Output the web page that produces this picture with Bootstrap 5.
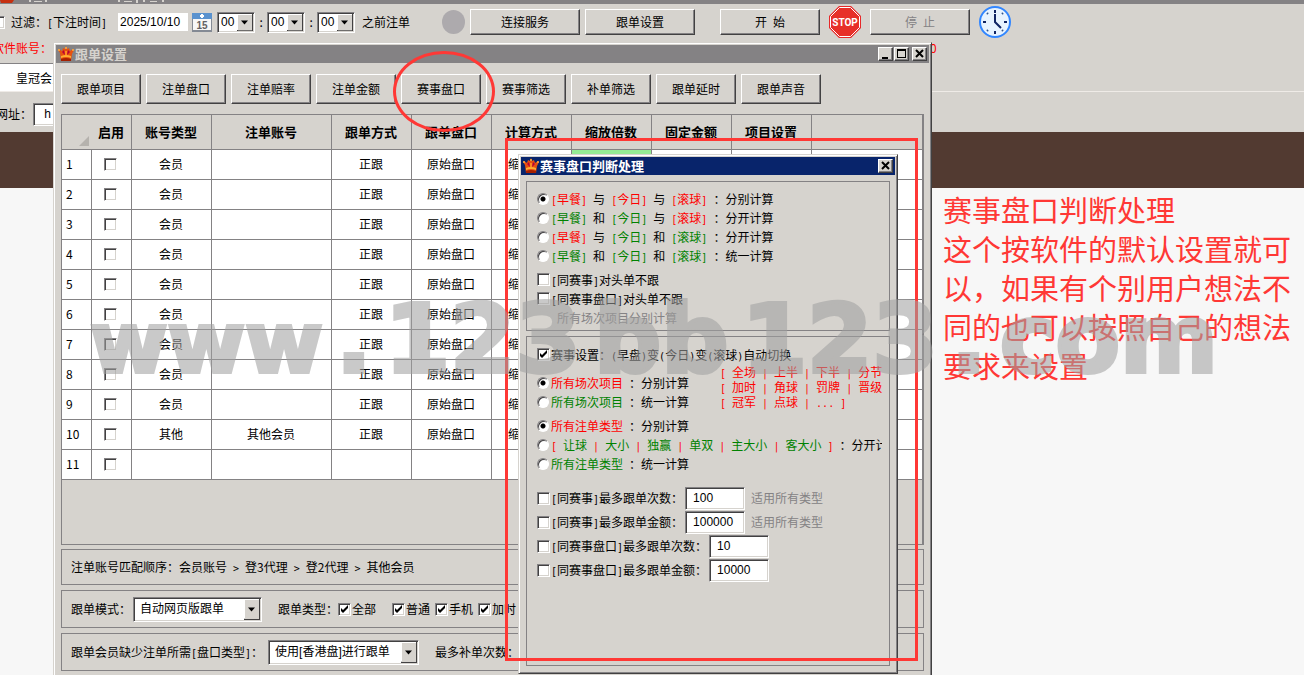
<!DOCTYPE html>
<html lang="zh-CN">
<head>
<meta charset="utf-8">
<meta name="viewport" content="width=device-width, initial-scale=1">
<title>跟单设置</title>
<link rel="stylesheet" href="https://cdn.jsdelivr.net/npm/bootstrap@5.3.0/dist/css/bootstrap.min.css">
<style>
:root{--face:#d6d3ce;--shade:#848284;--deep:#424142;--note:#ff3835}
body{font:12px/16px "Noto Sans CJK SC",sans-serif;color:#000;background:#f7f7f7;height:100vh;overflow:hidden;position:relative}
i{font:normal 10px/12px "DejaVu Sans Mono",monospace;white-space:pre}
label,span,legend{flex-shrink:0}
.r{color:#f00}.g{color:#008200}.gray{color:var(--shade)}
/* classic bevelled controls */
.btn-face{background:var(--face);color:#000;font-size:12px;line-height:16px;padding:0;border:1px solid;border-color:#fff var(--deep) var(--deep) #fff;box-shadow:inset -1px -1px var(--shade);flex-shrink:0}
.btn-face:disabled{background:var(--face);color:var(--shade);opacity:1;border-color:#fff var(--deep) var(--deep) #fff}
.bar-btn{height:26px}.w-a{width:110px}.w-b{width:100px}
.tab-btn{width:80px;height:30px}
.cap-btn{width:15px;height:14px;display:flex}
.sunk{background-color:#fff;border:1px solid;border-color:var(--shade) #fff #fff var(--shade);box-shadow:inset 1px 1px var(--deep),inset -1px -1px var(--face);border-radius:0;color:#000;flex-shrink:0}
input.sunk[type=text]{width:60px;height:23px;padding:0 7px;font:12px/16px "Liberation Sans",sans-serif}
input[type=checkbox]{appearance:none;width:13px;height:13px;margin:0;flex-shrink:0}
input[type=checkbox]:checked{background:#fff url("data:image/svg+xml,%3Csvg xmlns='http://www.w3.org/2000/svg' width='11' height='11'%3E%3Cpath d='M2 4v3l2 2 5-5V1L4 6z' fill='%23000'/%3E%3C/svg%3E") no-repeat}
input[type=radio]{appearance:none;width:12px;height:12px;margin:0 1px 0 0;border-radius:50%;background:#fff;border:1px solid;border-color:var(--shade) #fff #fff var(--shade);box-shadow:inset 1px 1px var(--deep);flex-shrink:0}
input[type=radio]:checked{background:radial-gradient(circle at 5px 5px,#000 2px,#fff 3px)}
select.sunk{appearance:none;height:21px;width:38px;padding:0 16px 0 3px;font:12px/16px "Liberation Sans","Noto Sans CJK SC",sans-serif;background:#fff url("data:image/svg+xml,%3Csvg xmlns='http://www.w3.org/2000/svg'%3E%3Crect width='100%25' height='100%25' fill='%23424142'/%3E%3Crect width='15' height='94%25' fill='%23fff'/%3E%3Crect x='1' y='1' width='14' height='90%25' fill='%23d6d3ce'/%3E%3Csvg x='0' y='50%25' overflow='visible'%3E%3Cpath d='M4-2h7L7.500 2z'/%3E%3C/svg%3E%3C/svg%3E") no-repeat right 1px top 1px/16px calc(100% - 2px)}
select.wide{height:25px;width:129px;padding-left:6px}
select.wider{width:151px}
/* desktop */
.strip{height:4px;background:var(--shade)}
.zone{background:var(--face)}
.toolbar{height:36px;padding-left:5px}
.toolbar .off{margin-left:-13px;margin-right:6px}
.date{width:70px;height:18px;padding:0 2px;border:0;font:12px/16px "Liberation Sans",sans-serif}
.led{width:23px;height:24px;border-radius:50%;background:#adaaad}
.colon{width:12px;text-align:center}
.acct{height:23px;padding:0 0 8px}
.acct .first{width:938px;margin-left:-8px}
.tabs{height:29px;border-bottom:1px solid #efebe7}
.tabs div{width:53px;background:#fff;border-top:1px solid var(--shade);padding:6px 0 0 16px}
.url{height:40px;padding-top:4px}
.url label{margin-left:-4px;width:37px}
.brown{height:56px;background:#523a31}
.m2{margin-left:2px}.m4{margin-left:4px}.m5{margin-left:5px}.m7{margin-left:7px}.m9{margin-left:9px}.m11{margin-left:11px}.m16{margin-left:16px}.m25{margin-left:25px}.m32{margin-left:32px}
/* windows */
.win{position:absolute;background:var(--face);border:1px solid;border-color:var(--face) var(--deep) var(--deep) var(--face);box-shadow:inset 1px 1px #fff,inset -1px -1px var(--shade);padding:2px}
.win-main{left:53px;top:42px;width:879px;bottom:-8px}
.win-dlg{left:518px;top:154px;width:380px;height:520px}
.title{height:18px;background:var(--shade);color:var(--face);font-weight:700;font-size:13px;padding:0 2px;gap:1px}
.win-dlg .title{background:#08246b;color:#fff}
.title svg.crown{width:16px;height:16px}
.win-body{padding:11px 5px 0}
.tab-row{gap:5px}
.gridbox{height:431px;margin-top:10px;border:1px solid var(--shade);border-right-width:2px}
.gridbox table{width:100%;table-layout:fixed;border-collapse:separate;border-spacing:0}
.gridbox th,.gridbox td{border:0 solid var(--shade);border-width:0 1px 1px 0;text-align:center;vertical-align:middle;padding:0 1px 1px 0;height:30px;overflow:hidden}
.gridbox th{height:35px;font-size:13px}
.gridbox td{background:#fff}
.gridbox td:first-child{text-align:left;padding-left:4px}
.gridbox td:nth-child(7){text-align:left;padding-left:16px}
.gridbox th:last-child,.gridbox td:last-child{border-right:0}
.gridbox td input{display:block;margin:0 0 0 12px}
.gridbox td.hit{background:#94eb94}
.gridbox th.corner{vertical-align:bottom}
.corner svg{display:block;margin:0 0 2px 17px}
.pane{border:1px solid var(--shade);padding-left:9px;height:38px;margin-top:5px}
.pane.low{height:36px;margin-top:4px}
.pane .tick{margin:0 5px 0 1px}
.pane .tick.far{margin-right:16px}
.dlg-body{padding:6px 5px 0}
.box{border:1px solid var(--shade);padding:7px 7px 3px 10px;overflow:hidden}
.box+.box{margin-top:5px;height:330px;padding-top:8px}
.line{height:19px;display:flex;align-items:center;gap:1px}
.line.tall{height:24px}
.line.tall input[type=text]{margin-left:1px}
.gap5{margin-top:5px}.gap9{margin-top:9px}.gap13{margin-top:13px}
.sorts{line-height:14px;margin:-8px 0 0 31px;overflow:hidden}
/* annotations over the windows */
.over{position:absolute;pointer-events:none}
.ring{left:393px;top:51px;width:102px;height:81px;border:3px solid var(--note);border-radius:50%}
.frame{left:505px;top:138px;width:413px;height:523px;border:3px solid var(--note)}
.remark{left:943px;right:8px;top:190px;color:var(--note);font-size:29px;line-height:39px}
.remark p{margin:0}
.wm{left:90px;width:1128px;top:285px;font:700 94px/110px "DejaVu Sans",sans-serif;color:#a0a0a0;-webkit-text-stroke:4px #a0a0a0;opacity:.56;display:flex;justify-content:space-between;align-items:baseline}
.wm .ww{font-size:84px}
</style>
</head>
<body>
<svg width="0" height="0" class="position-absolute"><symbol id="crown" viewBox="0 0 16 16"><path d="M2 7L0 4l1-1 3 2 1-3 2 1 1-3 1 3 2-1 1 3 3-2 1 1-2 4-1 7H3z" fill="#e75110"/><path d="M4 6l2-2 1 5zM12 6l-2-2-1 5z" fill="#b5003a"/><path d="M3 10q5-2 10 0v2q-5-2-10 0z" fill="#ffae31"/><path d="M3 13q5-2 10 0v2H3z" fill="#a52000"/><circle cx="1" cy="4" r="1" fill="#ffb242"/><circle cx="15" cy="4" r="1" fill="#ffb242"/><circle cx="8" cy="2" r="1" fill="#ffb242"/><path d="M7 5h2v4H7z" fill="#ff8a21"/></symbol></svg>
<main>
<div class="strip"><svg width="200" height="4" class="d-block"><path d="M0 0h14l-2 3H1z" fill="#c63010"/><path d="M29 0h2v2h-2zM34 1h8v1h-8zM45 0h2v2h-2zM118 0h2v2h-2zM124 1h8v1h-8zM136 0h2v3h-2zM143 0h2v2h-2zM150 1h7v1h-7zM162 0h2v2h-2z" fill="#d6d3ce"/></svg></div>
<div class="zone">
<div class="toolbar d-flex align-items-center"><input type="checkbox" id="flt" class="sunk off"><label for="flt">过滤：</label><span><i>[</i>下注时间<i>]</i></span><input class="date m11" type="text" value="2025/10/10" aria-label="日期"><svg class="m4 flex-shrink-0" width="20" height="19"><path d="M0 0h20v19H0z" fill="#848a94"/><path d="M1 6h18v11H1z" fill="#f7f7f7"/><path d="M0 0h20v6H0z" fill="#5a92ce"/><path d="M9 1h2v4H9zM8 2h4v2H8z" fill="#fff"/><text x="10" y="16" text-anchor="middle" font-family="Liberation Sans" font-weight="700" font-size="10" fill="#636163">15</text></svg><select class="sunk m5" aria-label="时"><option>00</option></select><span class="colon">:</span><select class="sunk" aria-label="分"><option>00</option></select><span class="colon">:</span><select class="sunk" aria-label="秒"><option>00</option></select><span class="m7">之前注单</span><span class="led m32"></span><button class="btn-face bar-btn w-a m5">连接服务</button><button class="btn-face bar-btn w-a m5">跟单设置</button><button class="btn-face bar-btn w-b m25">开&ensp;始</button>
<svg class="m9 flex-shrink-0" width="32" height="32" viewBox="0 0 32 32"><path d="M10 0h12l10 10v12L22 32H10L0 22V10z" fill="#e72829"/><path d="M10.500 1.500h11l9 9v11l-9 9h-11l-9-9v-11z" fill="#e73029" stroke="#fff"/><text x="16" y="20" text-anchor="middle" font-family="Roboto,sans-serif" font-weight="700" font-size="10" fill="#fff">STOP</text></svg><button class="btn-face bar-btn w-b m9" disabled>停&ensp;止</button><svg class="m9 flex-shrink-0" width="32" height="32" viewBox="0 0 32 32"><circle cx="16" cy="16" r="15" fill="#e7f3ff" stroke="#3186ff" stroke-width="2"/><path d="M16 4v3M16 25v3M4 16h3M25 16h3" stroke="#102463" stroke-width="2"/><path d="M8 7l1 1M23 8l1-1M8 25l1-1M23 24l1 1" stroke="#31558c" stroke-width="2"/><path d="M16 8v8l6 6" fill="none" stroke="#102463" stroke-width="2"/></svg></div>
<div class="acct d-flex r"><span class="first">软件账号：</span><span>0</span></div>
<div class="tabs d-flex"><div class="text-nowrap overflow-hidden">皇冠会员</div></div>
<div class="url d-flex align-items-center"><label for="u">网址：</label><input id="u" class="sunk" type="text" value=" h"></div>
</div>
<div class="brown"></div>
</main>

<section class="win win-main">
<div class="title d-flex align-items-center"><svg class="crown"><use href="#crown"/></svg><span class="me-auto">跟单设置</span><button class="btn-face cap-btn" aria-label="最小化"><svg width="12" height="11"><path d="M3 9h6v2H3z"/></svg></button><button class="btn-face cap-btn" aria-label="最大化"><svg width="12" height="11"><path d="M2 1h9v9H2zM3 3v6h7V3z" fill-rule="evenodd"/></svg></button><button class="btn-face cap-btn m2" aria-label="关闭"><svg width="12" height="11"><path d="M3 2l7 7M10 2L3 9" stroke="#000" stroke-width="2"/></svg></button></div>
<div class="win-body">
<div class="d-flex tab-row"><button class="btn-face tab-btn">跟单项目</button><button class="btn-face tab-btn">注单盘口</button><button class="btn-face tab-btn">注单赔率</button><button class="btn-face tab-btn">注单金额</button><button class="btn-face tab-btn">赛事盘口</button><button class="btn-face tab-btn">赛事筛选</button><button class="btn-face tab-btn">补单筛选</button><button class="btn-face tab-btn">跟单延时</button><button class="btn-face tab-btn">跟单声音</button></div>
<div class="gridbox"><table>
<colgroup><col width="30"><col width="40"><col width="80"><col width="120"><col width="80"><col width="80"><col width="80"><col width="80"><col width="80"><col width="80"><col></colgroup>
<thead><tr><th class="corner border-end-0"><svg width="10" height="10"><path d="M10 0v10H0z" fill="#b5b2ad"/></svg></th><th>启用</th><th>账号类型</th><th>注单账号</th><th>跟单方式</th><th>跟单盘口</th><th>计算方式</th><th>缩放倍数</th><th>固定金额</th><th>项目设置</th><th></th></tr></thead>
<tbody>
<tr><td>1</td><td><input type="checkbox" class="sunk" aria-label="启用1"></td><td>会员</td><td></td><td>正跟</td><td>原始盘口</td><td>缩</td><td class="hit"></td><td></td><td></td><td></td></tr>
<tr><td>2</td><td><input type="checkbox" class="sunk" aria-label="启用2"></td><td>会员</td><td></td><td>正跟</td><td>原始盘口</td><td>缩</td><td></td><td></td><td></td><td></td></tr>
<tr><td>3</td><td><input type="checkbox" class="sunk" aria-label="启用3"></td><td>会员</td><td></td><td>正跟</td><td>原始盘口</td><td>缩</td><td></td><td></td><td></td><td></td></tr>
<tr><td>4</td><td><input type="checkbox" class="sunk" aria-label="启用4"></td><td>会员</td><td></td><td>正跟</td><td>原始盘口</td><td>缩</td><td></td><td></td><td></td><td></td></tr>
<tr><td>5</td><td><input type="checkbox" class="sunk" aria-label="启用5"></td><td>会员</td><td></td><td>正跟</td><td>原始盘口</td><td>缩</td><td></td><td></td><td></td><td></td></tr>
<tr><td>6</td><td><input type="checkbox" class="sunk" aria-label="启用6"></td><td>会员</td><td></td><td>正跟</td><td>原始盘口</td><td>缩</td><td></td><td></td><td></td><td></td></tr>
<tr><td>7</td><td><input type="checkbox" class="sunk" aria-label="启用7"></td><td>会员</td><td></td><td>正跟</td><td>原始盘口</td><td>缩</td><td></td><td></td><td></td><td></td></tr>
<tr><td>8</td><td><input type="checkbox" class="sunk" aria-label="启用8"></td><td>会员</td><td></td><td>正跟</td><td>原始盘口</td><td>缩</td><td></td><td></td><td></td><td></td></tr>
<tr><td>9</td><td><input type="checkbox" class="sunk" aria-label="启用9"></td><td>会员</td><td></td><td>正跟</td><td>原始盘口</td><td>缩</td><td></td><td></td><td></td><td></td></tr>
<tr><td>10</td><td><input type="checkbox" class="sunk" aria-label="启用10"></td><td>其他</td><td>其他会员</td><td>正跟</td><td>原始盘口</td><td>缩</td><td></td><td></td><td></td><td></td></tr>
<tr><td>11</td><td><input type="checkbox" class="sunk" aria-label="启用11"></td><td></td><td></td><td></td><td></td><td></td><td></td><td></td><td></td><td></td></tr>
</tbody></table></div>
<div class="pane low d-flex align-items-center"><span>注单账号匹配顺序：会员账号<i> &gt; </i>登3代理<i> &gt; </i>登2代理<i> &gt; </i>其他会员</span></div>
<div class="pane d-flex align-items-center"><label for="mode">跟单模式：</label><select id="mode" class="sunk wide m2"><option>自动网页版跟单</option></select><span class="m16">跟单类型：</span><input type="checkbox" class="sunk" id="t1" checked><label for="t1" class="tick far">全部</label><input type="checkbox" class="sunk" id="t2" checked><label for="t2" class="tick">普通</label><input type="checkbox" class="sunk" id="t3" checked><label for="t3" class="tick">手机</label><input type="checkbox" class="sunk" id="t4" checked><label for="t4" class="tick">加时</label></div>
<div class="pane d-flex align-items-center"><label for="need">跟单会员缺少注单所需<i>[</i>盘口类型<i>]</i>：</label><select id="need" class="sunk wide wider m5"><option>使用[香港盘]进行跟单</option></select><span class="m16">最多补单次数：</span></div>
</div>
</section>

<section class="win win-dlg">
<div class="title d-flex align-items-center"><svg class="crown"><use href="#crown"/></svg><span class="me-auto">赛事盘口判断处理</span><button class="btn-face cap-btn" aria-label="关闭"><svg width="12" height="11"><path d="M3 2l7 7M10 2L3 9" stroke="#000" stroke-width="2"/></svg></button></div>
<div class="dlg-body">
<div class="box">
<div class="line"><input type="radio" name="a" id="a1" checked><label for="a1"><span class="r"><i>[</i>早餐<i>]</i></span><i> </i>与<i> </i><span class="r"><i>[</i>今日<i>]</i></span><i> </i>与<i> </i><span class="r"><i>[</i>滚球<i>]</i></span><i> </i>：分别计算</label></div>
<div class="line"><input type="radio" name="a" id="a2"><label for="a2"><span class="g"><i>[</i>早餐<i>]</i></span><i> </i>和<i> </i><span class="g"><i>[</i>今日<i>]</i></span><i> </i>与<i> </i><span class="r"><i>[</i>滚球<i>]</i></span><i> </i>：分开计算</label></div>
<div class="line"><input type="radio" name="a" id="a3"><label for="a3"><span class="r"><i>[</i>早餐<i>]</i></span><i> </i>与<i> </i><span class="g"><i>[</i>今日<i>]</i></span><i> </i>和<i> </i><span class="g"><i>[</i>滚球<i>]</i></span><i> </i>：分开计算</label></div>
<div class="line"><input type="radio" name="a" id="a4"><label for="a4"><span class="g"><i>[</i>早餐<i>]</i></span><i> </i>和<i> </i><span class="g"><i>[</i>今日<i>]</i></span><i> </i>和<i> </i><span class="g"><i>[</i>滚球<i>]</i></span><i> </i>：统一计算</label></div>
<div class="line gap5"><input type="checkbox" class="sunk" id="c1"><label for="c1"><i>[</i>同赛事<i>]</i>对头单不跟</label></div>
<div class="line"><input type="checkbox" class="sunk" id="c2"><label for="c2"><i>[</i>同赛事盘口<i>]</i>对头单不跟</label></div>
<div class="line gray ps-3"><span class="ms-1">所有场次项目分别计算</span></div>
</div>
<div class="box">
<div class="line"><input type="checkbox" class="sunk" id="c3" checked><label for="c3">赛事设置：<i>(</i>早盘<i>)</i>变<i>(</i>今日<i>)</i>变<i>(</i>滚球<i>)</i>自动切换</label></div>
<div class="d-flex gap9"><div>
<div class="line"><input type="radio" name="b" id="b1" checked><label for="b1"><span class="r">所有场次项目</span><i> </i>：分别计算</label></div>
<div class="line"><input type="radio" name="b" id="b2"><label for="b2"><span class="g">所有场次项目</span><i> </i>：统一计算</label></div></div>
<div class="sorts r text-nowrap"><i>[ </i>全场<i> | </i>上半<i> | </i>下半<i> | </i>分节<br><i>[ </i>加时<i> | </i>角球<i> | </i>罚牌<i> | </i>晋级<br><i>[ </i>冠军<i> | </i>点球<i> | ... ]</i></div></div>
<div class="line gap5"><input type="radio" name="c" id="d1" checked><label for="d1"><span class="r">所有注单类型</span><i> </i>：分别计算</label></div>
<div class="line overflow-hidden"><input type="radio" name="c" id="d2"><label for="d2" class="g text-nowrap"><i class="r">[ </i>让球<i class="r"> | </i>大小<i class="r"> | </i>独赢<i class="r"> | </i>单双<i class="r"> | </i>主大小<i class="r"> | </i>客大小<i class="r"> ] </i><span class="text-black">：分开计算</span></label></div>
<div class="line"><input type="radio" name="c" id="d3"><label for="d3"><span class="g">所有注单类型</span><i> </i>：统一计算</label></div>
<div class="line tall gap13"><input type="checkbox" class="sunk" id="e1"><label for="e1"><i>[</i>同赛事<i>]</i>最多跟单次数：</label><input type="text" class="sunk" value="100" aria-label="最多跟单次数"><span class="gray m5">适用所有类型</span></div>
<div class="line tall"><input type="checkbox" class="sunk" id="e2"><label for="e2"><i>[</i>同赛事<i>]</i>最多跟单金额：</label><input type="text" class="sunk" value="100000" aria-label="最多跟单金额"><span class="gray m5">适用所有类型</span></div>
<div class="line tall"><input type="checkbox" class="sunk" id="e3"><label for="e3"><i>[</i>同赛事盘口<i>]</i>最多跟单次数：</label><input type="text" class="sunk" value="10" aria-label="盘口最多跟单次数"></div>
<div class="line tall"><input type="checkbox" class="sunk" id="e4"><label for="e4"><i>[</i>同赛事盘口<i>]</i>最多跟单金额：</label><input type="text" class="sunk" value="10000" aria-label="盘口最多跟单金额"></div>
</div>
</div>
</section>

<div class="over ring"></div>
<div class="over frame"></div>
<div class="over remark"><p>赛事盘口判断处理</p><p>这个按软件的默认设置就可以，如果有个别用户想法不同的也可以按照自己的想法要求来设置</p></div>
<div class="over wm"><span class="ww">www</span><span>.</span><span>123</span><span>bb</span><span>123</span><span>.</span><span>com</span></div>
<script src="https://cdn.jsdelivr.net/npm/bootstrap@5.3.0/dist/js/bootstrap.bundle.min.js"></script>
</body>
</html>
